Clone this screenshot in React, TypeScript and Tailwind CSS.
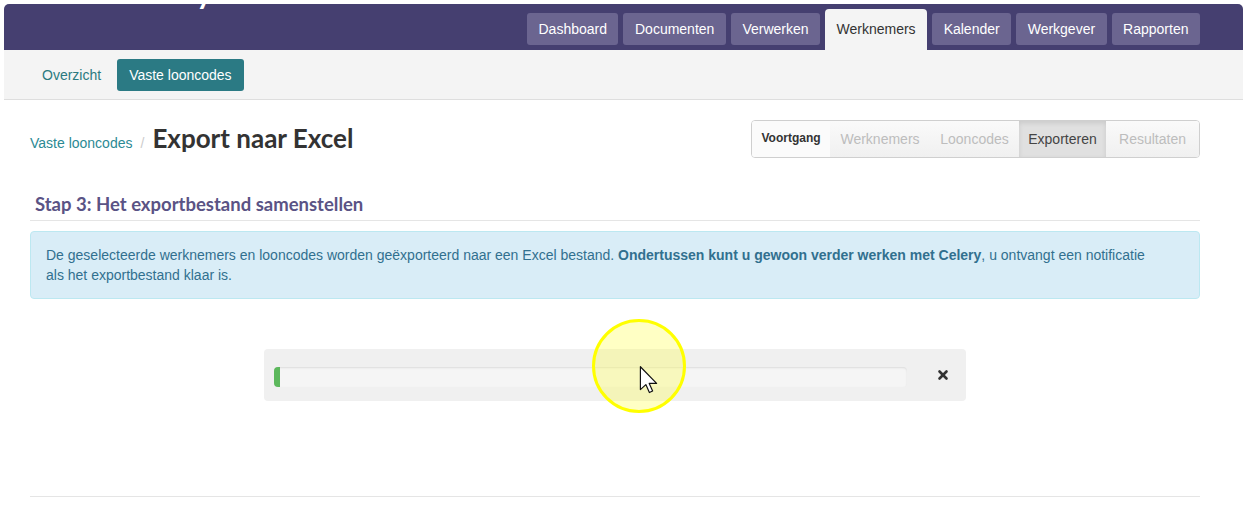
import { X } from 'lucide-react';

const mainTabs = ['Dashboard', 'Documenten', 'Verwerken', 'Werknemers', 'Kalender', 'Werkgever', 'Rapporten'];

const steps = [
  { label: 'Voortgang', state: 'title', width: 'w-[78px]' },
  { label: 'Werknemers', state: 'done', width: 'w-[100px]' },
  { label: 'Looncodes', state: 'done', width: 'w-[89px]' },
  { label: 'Exporteren', state: 'active', width: 'w-[87px]' },
  { label: 'Resultaten', state: 'todo', width: 'w-[93px]' },
];

function Cursor() {
  return (
    <div className="pointer-events-none absolute left-[592px] top-[319px] h-[94px] w-[94px] rounded-full border-[3px] border-[#ffff00] bg-[rgba(255,255,60,0.3)]">
      <svg className="absolute left-[44px] top-[44px]" width="19" height="28" viewBox="0 0 12 19">
        <path d="M0.5 0.5 L0.5 16 L4.2 12.6 L6.6 18 L8.8 17 L6.5 11.8 L11.5 11.8 Z" fill="#fff" stroke="#111" strokeWidth="0.8" strokeLinejoin="round" />
      </svg>
    </div>
  );
}

export default function App() {
  return (
    <div className="relative h-[506px] w-full overflow-hidden bg-white px-1 pt-1 font-['Liberation_Sans',Arial,sans-serif] text-sm text-[#333]">
      <div className="flex h-[502px] flex-col overflow-hidden rounded-t-[5px] rounded-b-[6px] bg-white">
        {/* top bar */}
        <header className="flex h-[46px] items-end justify-between bg-[#453f70] pr-[43px]">
          <div className="ml-[122px] self-start -mt-[27px] font-['Lato',sans-serif] text-[30px] font-bold leading-[30px] text-white">
            Celery
          </div>
          <nav className="flex items-end gap-[5px]">
            {mainTabs.map((tab) =>
              tab === 'Werknemers' ? (
                <span
                  key={tab}
                  className="flex h-[41px] items-center rounded-t-[4px] bg-[#f4f4f4] px-[11.5px] pb-[1px] text-[#333]"
                >
                  {tab}
                </span>
              ) : (
                <span
                  key={tab}
                  className="mb-[5px] flex h-[32px] items-center rounded-[3px] bg-[#6b6590] px-[11.5px] text-white"
                >
                  {tab}
                </span>
              ),
            )}
          </nav>
        </header>

        {/* sub navigation */}
        <div className="flex h-[50px] items-center gap-[4px] border-b border-[#dedede] bg-[#f4f4f4] pl-[26px]">
          <span className="px-3 text-[#2b7a80]">Overzicht</span>
          <span className="flex h-[32px] items-center rounded-[3px] bg-[#2b7a84] px-3 text-white">Vaste looncodes</span>
        </div>

        <main className="ml-[26px] flex w-[1170px] flex-1 flex-col">
          <div className="mt-[20px] flex items-center justify-between">
            <div className="flex items-baseline">
              <span className="text-[#2b8a94]">Vaste looncodes</span>
              <span className="mx-[8px] text-[#ccc]">/</span>
              <h1 className="font-['Lato',sans-serif] text-[26px] font-bold text-[#333]">Export naar Excel</h1>
            </div>
            <div className="flex h-[38px] overflow-hidden rounded-[4px] border border-[#cfcfcf]">
              {steps.map((s) => (
                <span
                  key={s.label}
                  className={
                    s.state === 'title'
                      ? `flex ${s.width} items-center justify-center bg-[#fbfbfb] text-[12px] font-bold text-[#333]`
                      : s.state === 'active'
                        ? `flex ${s.width} items-center justify-center bg-[#e0e0e0] text-[14px] text-[#444] shadow-[inset_0_2px_5px_rgba(0,0,0,0.1)]`
                        : `flex ${s.width} items-center justify-center bg-gradient-to-b from-[#fafafa] to-[#f0f0f0] text-[14px] text-[#bdbdbd]`
                  }
                >
                  {s.label}
                </span>
              ))}
            </div>
          </div>

          <h2 className="mt-[35px] border-b border-[#e5e5e5] pb-[5px] pl-[5px] font-['Lato',sans-serif] text-[18.5px] font-bold leading-[22px] text-[#5a5385]">
            Stap 3: Het exportbestand samenstellen
          </h2>

          <div className="mt-[10px] rounded-[4px] border border-[#bce8f1] bg-[#d9edf7] px-[15px] py-[13px] leading-[20px] text-[#31708f]">
            De geselecteerde werknemers en looncodes worden geëxporteerd naar een Excel bestand.{' '}
            <strong>Ondertussen kunt u gewoon verder werken met Celery</strong>, u ontvangt een notificatie
            <br />
            als het exportbestand klaar is.
          </div>

          <div className="mx-auto mt-[50px] flex h-[52px] w-[702px] items-center rounded-[4px] bg-[#f0f0f0] pl-[10px] pr-[16px]">
            <div className="mt-[4px] h-[20px] flex-1 overflow-hidden rounded-[4px] bg-[#f5f5f5] shadow-[inset_0_1px_2px_rgba(0,0,0,0.1)]">
              <div className="h-full w-[6px] bg-[#5cb85c]" />
            </div>
            <X className="ml-[29px] h-[14px] w-[14px] text-[#333]" strokeWidth={4.5} />
          </div>

          <div className="mt-auto mb-[9px] border-b border-[#e5e5e5]" />
        </main>
      </div>
      <Cursor />
    </div>
  );
}
